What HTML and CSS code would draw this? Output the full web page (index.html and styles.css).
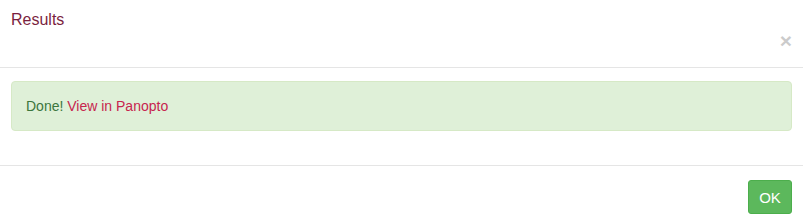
FILE: index.html
```html
<!DOCTYPE html>
<html>
<head>
<meta charset="utf-8">
<link rel="stylesheet" href="styles.css">
</head>
<body>
<div class="modal">
  <div class="modal-header">
    <h4 class="modal-title">Results</h4>
    <div class="close-row"><button class="close" type="button">&times;</button></div>
  </div>
  <div class="modal-body">
    <div class="alert">Done! <a href="#" class="alert-link">View in Panopto</a></div>
  </div>
  <div class="modal-footer">
    <button class="btn-ok" type="button">OK</button>
  </div>
</div>
</body>
</html>
```
FILE: styles.css
```css
html, body {
  margin: 0;
  padding: 0;
  background: #fff;
}
body {
  font-family: "Liberation Sans", Arial, sans-serif;
  font-size: 14px;
  color: #333;
}
.modal {
  width: 803px;
  height: 223px;
  box-sizing: border-box;
}
.modal-header {
  height: 68px;
  box-sizing: border-box;
  border-bottom: 1px solid #e5e5e5;
  padding: 10px 11px 0 11px;
}
.modal-title {
  margin: 0;
  font-size: 16px;
  font-weight: normal;
  line-height: 20px;
  color: #7b1f3f;
}
.close-row {
  display: flex;
  justify-content: flex-end;
  margin-top: 0;
}
.close {
  border: 0;
  background: transparent;
  padding: 0;
  font-family: "Liberation Sans", Arial, sans-serif;
  font-size: 21px;
  font-weight: bold;
  line-height: 21px;
  color: #000;
  opacity: 0.2;
  cursor: pointer;
}
.modal-body {
  padding: 13px 11px 0 11px;
  height: 97px;
  box-sizing: border-box;
}
.alert {
  height: 50px;
  box-sizing: border-box;
  padding: 0 14px;
  display: flex;
  align-items: center;
  background: #dff0d8;
  border: 1px solid #d6e9c6;
  border-radius: 4px;
  color: #3c763d;
  line-height: 20px;
  white-space: pre;
}
.alert-link {
  color: #c7254e;
  text-decoration: none;
}
.modal-footer {
  border-top: 1px solid #e5e5e5;
  padding: 14px 11px 0 11px;
  display: flex;
  justify-content: flex-end;
}
.btn-ok {
  width: 44px;
  height: 34px;
  box-sizing: border-box;
  background: #5cb85c;
  border: 1px solid #4cae4c;
  border-radius: 3px;
  color: #fff;
  font-family: "Liberation Sans", Arial, sans-serif;
  font-size: 15px;
  padding: 0;
  cursor: pointer;
}
```
